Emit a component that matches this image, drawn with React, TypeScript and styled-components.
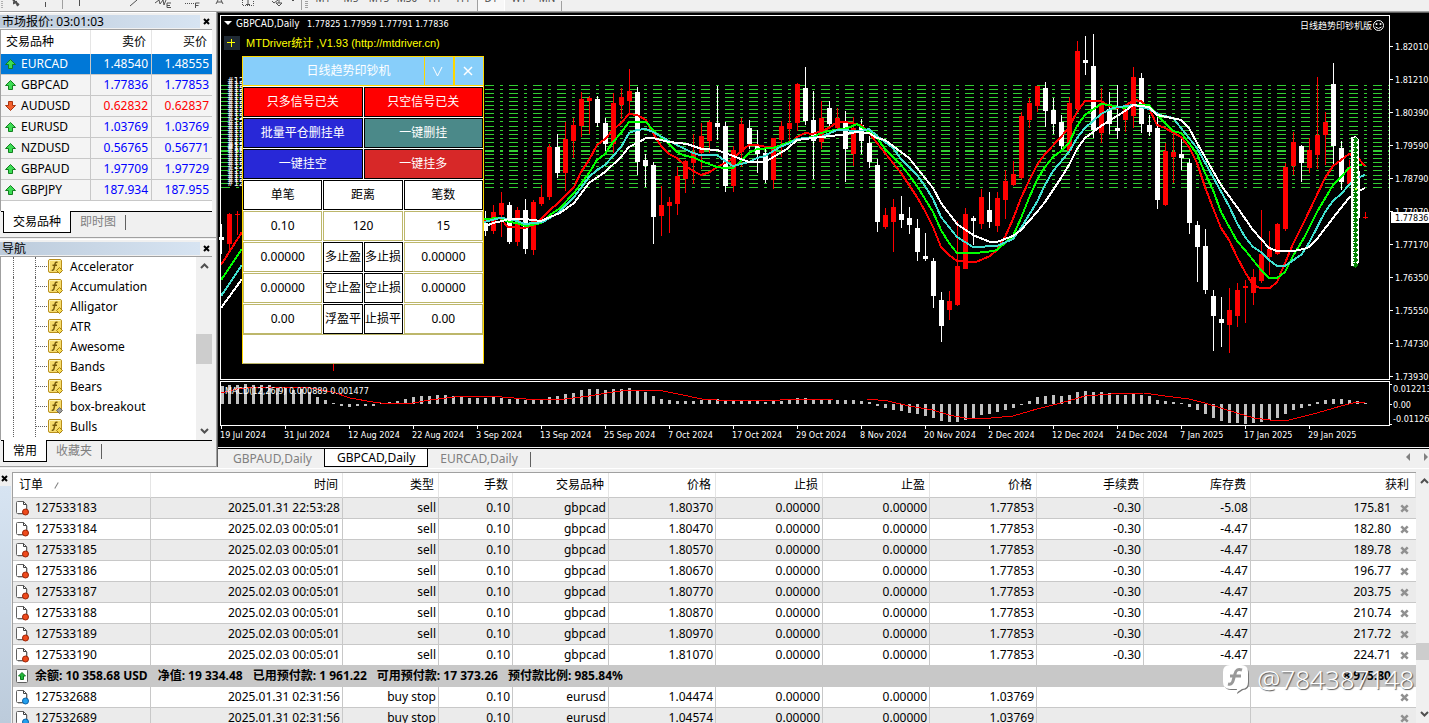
import React from 'react';
import styled, { createGlobalStyle } from 'styled-components';

const UI = `"Noto Sans", "Noto Sans CJK SC", sans-serif`;
const CHART = `"DejaVu Sans Condensed", "Noto Sans CJK SC", sans-serif`;

const Global = createGlobalStyle`
  * { box-sizing: border-box; }
  html, body, #root { height: 100%; }
  body { margin: 0; overflow: hidden; background: #f0f0f0; color: #000; font: 12px/20px ${UI}; }
  button, input { font: inherit; color: inherit; margin: 0; padding: 0; border: 0; border-radius: 0; background: none; }
`;

/* ---------- shell ---------- */
const Shell = styled.div`
  display: flex;
  flex-direction: column;
  height: 100%;
`;
const Toolbar = styled.header`
  display: flex;
  align-items: flex-end;
  flex: none;
  height: 11px;
  overflow: hidden;
`;
const ToolIcons = styled.svg`
  display: block;
  flex: none;
`;
const Frame = styled.button<{ $on?: boolean }>`
  width: 28px;
  height: 20px;
  padding-bottom: 6px;
  color: #505050;
  font-size: 10px;
  line-height: 12px;
  text-align: center;
  flex: none;
  ${(p) => p.$on && 'background:#f8f8f8;border-left:1px solid #a0a0a0;border-right:1px solid #fff;'}
`;
const BarEnd = styled.div`
  width: 1px;
  height: 10px;
  background: #a0a0a0;
`;
const Workspace = styled.div`
  display: flex;
  flex: none;
  border-top: 1px solid #a0a0a0;
`;
const Sidebar = styled.aside`
  display: flex;
  flex-direction: column;
  gap: 1px;
  width: 217px;
  flex: none;
  border-right: 1px solid #a0a0a0;
`;
const Dock = styled.section`
  padding: 1px 4px 4px 0;
  border-top: 1px solid #fff;
  border-bottom: 1px solid #a0a0a0;
`;
const DockTitle = styled.h2`
  display: flex;
  align-items: center;
  justify-content: space-between;
  height: 14px;
  margin: 0 0 1px;
  font-size: 12px;
  font-weight: 400;
  line-height: 14px;
  span {
    flex: 1;
    height: 13px;
    line-height: 13px;
    padding-left: 2px;
    background: linear-gradient(90deg, #bccbdb, #d7e4f2);
  }
`;
const DockClose = styled.button`
  display: flex;
  align-items: center;
  justify-content: center;
  width: 12px;
  height: 12px;
`;
const DockTabs = styled.div`
  display: flex;
  height: 22px;
  padding-left: 2px;
  border-top: 1px solid #000;
  margin-left: 1px;
`;
const DockTab = styled.button<{ $on?: boolean }>`
  height: 22px;
  margin-top: -1px;
  padding: 0 9px;
  line-height: 20px;
  color: ${(p) => (p.$on ? '#000' : '#808080')};
  ${(p) => p.$on && 'background:#fff;border:1px solid #000;border-top:0;'}
`;
const TabRule = styled.i`
  width: 1px;
  height: 15px;
  margin-top: 3px;
  background: #606060;
`;

/* ---------- quotes ---------- */
const QuoteBox = styled.div`
  height: 182px;
  border-top: 1px solid #a0a0a0;
  border-left: 1px solid #a0a0a0;
  background: #fff;
`;
const Quotes = styled.table`
  width: 100%;
  table-layout: fixed;
  border-collapse: separate;
  border-spacing: 0;
  th, td {
    height: 21px;
    padding: 0 3px 0 0;
    line-height: 20px;
    text-align: right;
    font-weight: 400;
    border-right: 1px solid #c8c8c8;
    border-bottom: 1px solid #c8c8c8;
  }
  th { height: 24px; padding-right: 5px; border-right-color: #e5e5e5; border-bottom: 0; }
  th:first-child { text-align: left; padding-left: 5px; }
  th:last-child, td:last-child { border-right: 0; }
`;
const QuoteRow = styled.tr<{ $tone: 'up' | 'down' | 'sel' }>`
  background: ${(p) => (p.$tone === 'sel' ? '#0078d7' : '#f4f4f4')};
  color: ${(p) => ({ up: '#0000ff', down: '#ff0000', sel: '#fff' })[p.$tone]};
  td:first-child {
    text-align: left;
    color: ${(p) => (p.$tone === 'sel' ? '#fff' : '#000')};
  }
`;
const IconLabel = styled.div<{ $pad: number }>`
  display: flex;
  align-items: center;
  gap: 5px;
  padding-left: ${(p) => p.$pad}px;
`;

/* ---------- navigator ---------- */
const Tree = styled.div`
  display: flex;
  height: 184px;
  border-top: 1px solid #a0a0a0;
  border-left: 1px solid #a0a0a0;
  background: #fff;
  overflow: hidden;
`;
const TreeList = styled.ul`
  flex: 1;
  margin: 0;
  padding: 0 0 0 12px;
  list-style: none;
`;
const TreeItem = styled.li`
  display: flex;
  align-items: center;
  height: 20px;
  border-left: 1px dotted #606060;
  &::before {
    content: '';
    width: 11px;
    height: 1px;
    order: 1;
    border-top: 1px dotted #606060;
  }
  &::after {
    content: '';
    width: 21px;
    height: 20px;
    order: 0;
    border-right: 1px dotted #606060;
  }
  svg { order: 2; margin: 0 6px 0 1px; }
  span { order: 3; }
`;
const Scroll = styled.div<{ $w: number }>`
  display: flex;
  flex-direction: column;
  justify-content: space-between;
  width: ${(p) => p.$w}px;
  flex: none;
  background: #f0f0f0;
  button { height: 18px; display: flex; align-items: center; justify-content: center; width: 17px; }
`;
const Thumb = styled.div<{ $h: number; $gap: number }>`
  height: ${(p) => p.$h}px;
  margin-top: ${(p) => p.$gap}px;
  margin-bottom: auto;
  background: #cdcdcd;
`;

/* ---------- chart ---------- */
const ChartArea = styled.main`
  flex: 1;
  min-width: 0;
  border-left: 1px solid #606060;
`;
const Canvas = styled.div`
  position: relative;
  display: flex;
  justify-content: flex-end;
  overflow: hidden;
  background: #000;
  border-top: 1px solid #606060;
  border-bottom: 1px solid #000;
  svg { display: block; flex: none; }
`;
const ChartTabs = styled.nav`
  display: flex;
  align-items: flex-start;
  height: 19px;
  margin-top: 1px;
  padding-left: 3px;
  border-top: 1px solid #000;
`;
const ChartTab = styled.button<{ $on?: boolean }>`
  height: 18px;
  padding: 0 12px;
  line-height: 17px;
  color: ${(p) => (p.$on ? '#000' : '#808080')};
  ${(p) => p.$on && 'background:#fff;border:1px solid #000;border-top:0;'}
`;
const TabArrows = styled.div`
  display: flex;
  gap: 12px;
  margin-left: auto;
  padding-top: 4px;
`;

/* ---------- floating trade panel ---------- */
const Panel = styled.form`
  position: absolute;
  left: 24px;
  top: 43px;
  display: grid;
  grid-template-columns: repeat(6, 1fr);
  grid-template-rows: 29px repeat(8, 30px) 28px;
  gap: 1px;
  width: 242px;
  background: #fff;
  border: 1px solid #ffd700;
  border-bottom-color: #bdb76b;
`;
const PanelTitle = styled.div`
  grid-column: span 6;
  display: grid;
  grid-template-columns: 1fr 29px 30px;
  border-bottom: 1px solid #ffd700;
  background: #87cefa;
  color: #fff;
  line-height: 28px;
  text-align: center;
  span { padding-left: 30px; }
  button {
    display: flex;
    align-items: center;
    justify-content: center;
    padding-right: 3px;
    border-left: 1px solid #ffd700;
  }
  button + button { border-left-width: 2px; }
`;
const Action = styled.button<{ $bg: string }>`
  grid-column: span 3;
  background: ${(p) => p.$bg};
  border: 1px solid #000;
  color: #fff;
  text-align: center;
`;
const Heading = styled.label`
  grid-column: span 2;
  border: 1px solid #000;
  line-height: 28px;
  text-align: center;
`;
const Field = styled.input`
  grid-column: span 2;
  min-width: 0;
  width: 100%;
  border: 1px solid #bdb76b;
  text-align: center;
`;
const Mini = styled.button`
  border: 1px solid #000;
  white-space: nowrap;
  display: flex;
  justify-content: center;
  align-items: center;
  min-width: 0;
`;
const Footer = styled.output`
  grid-column: span 6;
  margin-top: -1px;
  border-top: 1px solid #bdb76b;
`;

/* ---------- terminal ---------- */
const Terminal = styled.section`
  position: relative;
  display: flex;
  flex: 1;
  min-height: 0;
  margin-top: 1px;
  border-top: 1px solid #fff;
  padding-top: 3px;
  overflow: hidden;
`;
const Strip = styled.div`
  display: flex;
  flex-direction: column;
  width: 12px;
  flex: none;
  button { display: flex; align-items: center; justify-content: flex-start; height: 12px; padding-left: 1px; }
  &::after { content: ''; flex: 1; width: 11px; margin-top: 2px; background: linear-gradient(#d7e4f2, #bccbdb); }
`;
const OrdersBox = styled.div`
  flex: 1;
  min-width: 0;
  background: #fff;
  border-top: 1px solid #a0a0a0;
  border-left: 1px solid #a0a0a0;
`;
const Orders = styled.table`
  width: 100%;
  table-layout: fixed;
  border-collapse: separate;
  border-spacing: 0;
  th, td {
    height: 21px;
    padding: 0 2px 0 0;
    line-height: 20px;
    text-align: right;
    font-weight: 400;
    white-space: nowrap;
    border-right: 1px solid #c8c8c8;
    border-bottom: 1px solid #c8c8c8;
  }
  th { height: 25px; padding-right: 4px; border-right-color: #e5e5e5; }
  th:first-child { text-align: left; padding-left: 6px; }
  th:last-child { padding-right: 6px; }
  td:first-child { text-align: left; }
  td:last-child { border-right: 0; }
`;
const OrderRow = styled.tr<{ $alt: boolean }>`
  background: ${(p) => (p.$alt ? '#ebebeb' : '#fff')};
`;
const Summary = styled.tr`
  background: #c8c8c8;
  && td { font-weight: 700; border-right: 0; }
`;
const SumList = styled.div`
  display: flex;
  gap: 10px;
`;
const Profit = styled.div`
  display: flex;
  justify-content: flex-end;
  align-items: center;
  gap: 9px;
  padding-right: 5px;
  button { display: flex; width: 9px; }
`;
const SumProfit = styled.div`
  padding-right: 23px;
`;
const SortMark = styled.i`
  display: inline-block;
  width: 1px;
  height: 7px;
  margin-left: 13px;
  background: #808080;
  transform: rotate(30deg);
`;
const Watermark = styled.div`
  position: absolute;
  right: 15px;
  top: 194px;
  display: flex;
  align-items: center;
  gap: 8px;
  color: #fff;
  font-size: 26px;
  font-weight: 300;
  line-height: 32px;
  text-shadow: 1px 1px 1px #555;
`;

/* ---------- small drawings ---------- */
const Cross = ({ s = 7, c = '#000', w = 2 }: { s?: number; c?: string; w?: number }) => (
  <svg width={s} height={s} viewBox="0 0 7 7" aria-hidden="true">
    <path d="M1 1L6 6M6 1L1 6" stroke={c} strokeWidth={w} />
  </svg>
);
const Chevron = ({ up }: { up?: boolean }) => (
  <svg width="9" height="6" viewBox="0 0 9 6" aria-hidden="true">
    <path d={up ? 'M1 5L4.500 1.500L8 5' : 'M1 1L4.500 4.500L8 1'} fill="none" stroke="#505050" strokeWidth="2" />
  </svg>
);
const Arrow = ({ down }: { down?: boolean }) => (
  <svg width="11" height="12" viewBox="0 0 11 12" aria-hidden="true">
    {down ? (
      <path d="M3.500 1.500h4v4h3L5.500 10.500L.5 5.500h3z" fill="#f4602c" stroke="#a83410" />
    ) : (
      <path d="M5.500 1.500L10.500 6.500h-3v4h-4v-4h-3z" fill="#3ddc55" stroke="#12801f" />
    )}
  </svg>
);
const FnIcon = ({ grey }: { grey?: boolean }) => (
  <svg width="16" height="16" viewBox="0 0 16 16" aria-hidden="true">
    <rect x="0.500" y="0.500" width="13" height="13" rx="1.500" fill="#f6dc6c" stroke="#b98f1c" />
    <path d="M1.500 12V1.500H12.500" fill="none" stroke="#fdf3b8" />
    <path d="M9.500 3.500C8 2.800 7.300 3.500 7 5L6 9.500C5.700 11 5 11.500 3.800 11M4.500 6.200H9" fill="none" stroke="#75590a" strokeWidth="1.400" />
    <path d="M11.500 8.500L14.500 11.500L11.500 14.500L8.500 11.500z" fill={grey ? '#9a9a9a' : '#f7d94c'} stroke={grey ? '#666' : '#a07b12'} />
  </svg>
);
const DocIcon = ({ blue }: { blue?: boolean }) => (
  <svg width="15" height="16" viewBox="0 0 15 16" aria-hidden="true">
    <path d="M3 14.500h8M12.500 5v6" fill="none" stroke="#c8c8c8" />
    <path d="M1.500 2.500q0-1 1-1h6l3 3v8q0 1-1 1h-8q-1 0-1-1z" fill="#fff" stroke="#606060" />
    <path d="M8.500 1.500v3h3" fill="none" stroke="#404040" />
    <circle cx="10.500" cy="12" r="3" fill={blue ? '#22a0ee' : '#ee4a1c'} stroke={blue ? '#0b62a8' : '#9c2406'} />
  </svg>
);
const BalanceIcon = () => (
  <svg width="15" height="16" viewBox="0 0 15 16" aria-hidden="true">
    <rect x="1.500" y="1.500" width="11" height="13" rx="1" fill="#fff" stroke="#606060" />
    <path d="M7 4.500L10.500 8H8.500v3.500h-3V8h-2z" fill="#22b83a" stroke="#0c7a1c" />
  </svg>
);

/* ---------- data ---------- */
const quotes: [string, string, string, 'up' | 'down' | 'sel'][] = [
  ['EURCAD', '1.48540', '1.48555', 'sel'],
  ['GBPCAD', '1.77836', '1.77853', 'up'],
  ['AUDUSD', '0.62832', '0.62837', 'down'],
  ['EURUSD', '1.03769', '1.03769', 'up'],
  ['NZDUSD', '0.56765', '0.56771', 'up'],
  ['GBPAUD', '1.97709', '1.97729', 'up'],
  ['GBPJPY', '187.934', '187.955', 'up'],
];
const indicators = ['Accelerator', 'Accumulation', 'Alligator', 'ATR', 'Awesome', 'Bands', 'Bears', 'box-breakout', 'Bulls'];
const orders = [
  ['127533183', '2025.01.31 22:53:28', '1.80370', '-5.08', '175.81'],
  ['127533184', '2025.02.03 00:05:01', '1.80470', '-4.47', '182.80'],
  ['127533185', '2025.02.03 00:05:01', '1.80570', '-4.47', '189.78'],
  ['127533186', '2025.02.03 00:05:01', '1.80670', '-4.47', '196.77'],
  ['127533187', '2025.02.03 00:05:01', '1.80770', '-4.47', '203.75'],
  ['127533188', '2025.02.03 00:05:01', '1.80870', '-4.47', '210.74'],
  ['127533189', '2025.02.03 00:05:01', '1.80970', '-4.47', '217.72'],
  ['127533190', '2025.02.03 00:05:01', '1.81070', '-4.47', '224.71'],
];
const pending = [
  ['127532688', '2025.01.31 02:31:56', '1.04474'],
  ['127532689', '2025.01.31 02:31:56', '1.04574'],
];
const heads = ['时间', '类型', '手数', '交易品种', '价格', '止损', '止盈', '价格', '手续费', '库存费', '获利'];
const colWidths = [138, 192, 96, 74, 96, 107, 107, 107, 107, 107, 107];

// One candle per 8px step: colour, high, body top, body bottom, low.
const firstCandles = 'W 224 237 240 254|R 213 214 244 250|R 211 214 215 235';
const mainCandles =
  'W 211 223 231 236|R 205 212 231 234|R 192 203 215 237|W 202 205 242 244|R 207 210 242 246|W 199 210 249 254|R 200 202 250 255|R 185 197 204 206|R 144 147 197 200|W 134 147 173 178|R 122 139 173 191|R 118 125 141 158|R 92 99 126 137|R 96 98 101 134|W 96 99 123 127|W 118 123 144 152|R 93 103 144 153|R 88 97 105 119|R 69 91 101 115|W 87 92 162 175|W 154 160 166 187|W 162 165 217 244|R 186 205 216 236|R 197 202 206 233|R 167 176 204 215|R 160 161 179 193|R 134 152 163 184|R 123 136 153 169|R 120 122 141 153|W 86 123 127 140|W 122 126 186 192|R 146 150 186 192|R 118 124 152 167|W 120 128 144 149|W 130 146 154 173|W 148 153 180 183|R 138 138 180 189|R 121 126 140 157|R 101 123 129 143|R 83 84 123 131|W 67 88 121 125|W 91 120 141 179|R 101 118 142 149|W 101 108 124 129|R 108 118 128 131|W 111 123 149 182|R 117 128 154 166|W 119 125 141 154|W 136 143 162 168|W 159 165 222 232|R 208 215 227 229|R 199 207 222 252|W 196 214 220 228|W 207 218 225 234|W 219 228 252 261|W 233 256 259 261|W 258 261 296 308|W 292 300 326 342|R 291 301 310 320|R 221 266 305 306|R 208 214 269 269|W 216 218 221 245|R 189 197 224 229|W 192 210 222 228|R 192 198 226 232|R 170 181 200 219|R 161 174 185 186|R 112 116 178 179|R 98 103 120 128|R 86 86 106 112|W 82 88 111 127|W 98 110 124 134|W 115 122 146 149|R 97 103 151 152|R 41 51 109 110|W 36 60 63 75|W 34 66 130 138|R 88 103 133 143|W 92 109 124 134|W 85 128 131 139|R 106 109 120 132|R 67 77 116 128|W 73 78 124 133|W 115 125 132 136|W 112 128 200 209|R 143 151 205 206|R 134 152 157 183|W 139 154 158 170|W 159 163 223 234|W 221 225 247 282|W 229 246 290 294|W 290 296 316 351|W 297 319 323 347|R 288 310 325 353|R 283 290 316 327|R 280 286 288 323|R 269 277 293 305|R 210 254 281 283|R 231 249 257 275|R 223 224 254 255|R 163 167 229 231|R 132 142 166 175|W 145 146 163 182|R 138 150 168 173|R 77 135 155 169|R 112 122 135 165|W 63 84 146 165|W 141 148 182 190|R 160 167 184 186|W 165 171 218 220|R 212 217 218 219';

type Candle = { x: number; up: boolean; v: number[] };
const parse = (s: string, x0: number): Candle[] =>
  s.split('|').map((t, i) => {
    const [c, ...v] = t.split(' ');
    return { x: x0 + i * 8, up: c === 'R', v: v.map(Number) };
  });
const allCandles: Candle[] = [...parse(firstCandles, 221), ...parse(mainCandles, 485)];

const averages: [string, string][] = [
  ['#ff0000', '221,265 242,232|484,221 500,218 508,227 525,228 535,224 542,218 550,210 558,203 574,187 581,172 589,160 597,145 605,139 613,130 621,123 629,114 637,115 646,120 653,133 661,146 669,154 677,158 686,166 693,171 701,175 710,172 717,167 725,163 733,159 740,152 749,145 757,145 766,147 780,147 790,143 797,137 805,133 813,134 821,131 829,128 837,122 845,122 861,125 869,133 885,153 901,173 917,197 925,211 933,227 941,247 949,255 957,261 976,262 990,256 997,250 1005,237 1013,219 1021,198 1029,181 1037,165 1045,154 1061,137 1069,127 1077,112 1085,101 1101,101 1109,106 1117,108 1125,106 1134,100 1141,101 1149,108 1157,125 1165,128 1181,137 1189,147 1197,163 1205,187 1213,208 1221,228 1229,240 1237,257 1245,272 1253,285 1260,288 1270,288 1277,282 1285,263 1293,244 1305,220 1325,178 1333,166 1349,154 1357,157 1365,166'],
  ['#00ff00', '221,280 242,249|484,219 500,218 509,222 517,223 526,226 541,223 550,215 560,208 574,193 589,173 597,160 605,154 613,142 621,133 629,122 646,122 653,130 661,137 669,144 677,152 685,156 693,157 701,161 717,167 725,168 733,168 741,161 749,153 757,149 773,148 784,144 797,139 813,137 821,133 829,131 848,128 857,124 869,132 877,138 885,149 901,165 909,175 917,186 933,212 941,230 949,243 957,253 976,253 993,251 997,250 1013,236 1021,218 1029,198 1037,180 1045,167 1053,157 1061,151 1069,143 1077,126 1085,115 1101,104 1109,105 1125,108 1133,105 1149,105 1157,115 1173,131 1181,133 1189,143 1197,154 1205,173 1213,190 1221,212 1237,241 1245,250 1261,270 1269,278 1277,278 1285,272 1293,256 1304,238 1317,212 1333,185 1341,177 1349,168 1357,165 1362,165'],
  ['#40e0d0', '221,296 242,265|484,222 500,218 509,219 517,221 525,224 543,222 558,213 574,197 589,177 597,170 605,165 621,147 629,133 637,130 646,129 653,132 669,141 693,153 700,155 717,155 725,161 733,166 749,162 757,158 765,156 780,147 790,143 797,139 805,138 821,137 837,130 861,131 869,129 877,136 893,148 901,159 917,175 925,186 933,199 941,217 957,237 973,247 997,246 1013,239 1021,228 1037,202 1045,185 1053,171 1069,152 1077,138 1085,128 1101,114 1113,108 1133,105 1149,109 1160,115 1173,118 1181,128 1197,148 1213,177 1229,206 1237,223 1245,237 1253,247 1261,252 1269,260 1277,266 1285,266 1302,254 1309,243 1325,212 1333,201 1341,194 1349,185 1357,178 1365,175'],
  ['#ffffff', '221,308 242,279|484,227 493,223 502,221 509,219 525,219 541,221 550,217 560,213 574,203 589,183 605,172 621,157 629,147 637,143 646,138 653,138 669,142 687,144 702,149 717,150 733,156 749,162 765,162 780,153 787,149 797,140 813,138 840,135 857,132 869,133 877,138 885,140 909,158 933,188 941,203 957,224 973,235 990,242 997,242 1013,236 1021,230 1037,212 1045,202 1053,190 1061,178 1069,165 1077,149 1085,138 1101,126 1125,111 1133,105 1149,107 1157,115 1181,120 1189,128 1197,143 1221,185 1237,207 1253,230 1269,248 1277,251 1293,251 1304,249 1309,247 1317,239 1333,218 1349,198 1357,192 1365,188'],
];

// Top (or, under the zero line at 404, bottom) of every histogram bar.
const histogram = [
  386, 385, 385, 384, 385, 385, 385, 387, 388, 390, 389, 392, 397, 400, 403, 406, 407, 406, 406, 406, 403, 402, 401, 399, 397, 396, 396, 395, 395, 396, 397, 398, 398, 398, 397, 398, 399, 399, 400, 399, 399, 397, 396, 394, 393, 390, 389, 389, 390, 389, 389, 388, 391, 392, 396, 399, 400, 401, 401, 401, 400, 400, 399, 400, 400, 400, 400, 401, 402, 401, 401, 400, 398, 398, 399,
  399, 399, 400, 400, 400, 401, 402, 406, 408, 410, 411, 413, 414, 416, 418, 421, 422, 422, 420, 418, 415, 414, 412, 410, 408, 405, 401, 397, 396, 395, 396, 395, 392, 391, 392, 392, 393, 395, 395, 394, 395, 396, 400, 401, 402, 403, 407, 410, 414, 418, 421, 423, 423, 424, 423, 422, 420, 418, 414, 410, 408, 406, 402, 400, 399, 399, 400, 401, 403,
];
const signal =
  '221,393 237,389 256,387 304,387 333,392 350,398 373,402 389,404 413,403 430,400 454,397 477,396 502,397 526,399 565,399 589,396 613,392 629,390 658,390 678,394 702,399 717,400 780,400 834,399 867,399 888,401 909,406 933,410 949,415 965,418 991,418 1013,416 1037,409 1061,403 1085,396 1111,394 1144,393 1165,396 1189,399 1205,403 1221,408 1237,413 1254,418 1270,420 1289,420 1317,413 1341,406 1357,402 1365,402';
const levels = [85, 89, 93, 97, 101, 105, 109, 113, 117, 121, 126, 130, 134, 138, 142, 146, 150, 151, 154, 158, 162, 166, 170, 175, 179, 183, 187];
const prices = ['1.82010', '1.81210', '1.80390', '1.79590', '1.78790', '1.77970', '1.77170', '1.76350', '1.75550', '1.74730', '1.73930'];
const dates = ['19 Jul 2024', '31 Jul 2024', '12 Aug 2024', '22 Aug 2024', '3 Sep 2024', '13 Sep 2024', '25 Sep 2024', '7 Oct 2024', '17 Oct 2024', '29 Oct 2024', '8 Nov 2024', '20 Nov 2024', '2 Dec 2024', '12 Dec 2024', '24 Dec 2024', '7 Jan 2025', '17 Jan 2025', '29 Jan 2025'];
const range = (n: number) => Array.from({ length: n }, (_, i) => i);

const PriceChart = () => (
  <svg width="1211" height="433" viewBox="218 13 1211 433" shapeRendering="crispEdges" fontFamily={CHART} fontSize="9" fill="#fff">
    {levels.map((y) => (
      <line key={y} x1="221" x2="1389" y1={y + 0.5} y2={y + 0.5} stroke="#32cd32" strokeDasharray="9 6 3 6" />
    ))}
    {levels.map((y) => (
      <text key={y} x="227" y={y - 1}>#12</text>
    ))}
    {allCandles.map(({ x, up, v }) => (
      <g key={x} fill={up ? '#ff0000' : '#ffffff'}>
        <rect x={x} y={v[0]} width="1" height={v[3] - v[0]} />
        <rect x={x - 2} y={v[1]} width="5" height={v[2] - v[1]} />
      </g>
    ))}
    <rect x="333" y="364" width="1" height="7" fill="#ff0000" />
    {averages.map(([c, pts]) =>
      pts.split('|').map((p) => <polyline key={c + p.slice(0, 7)} points={p} fill="none" stroke={c} strokeWidth="2" />),
    )}
    <path d="M1351 137h3v-1h1l4 4v122l-4 5h-2v-1h-2z" fill="#fff" />
    {range(26).map((i) => (
      <path key={i} d={`M1353 ${138 + i * 5}h2v-1l4 3l-4 3v-1h-2v-1h1v-2h-1z`} fill="#008000" />
    ))}
    <rect x="1355" y="188" width="2" height="2" fill="#adff2f" />

    {histogram.map((y, i) => (
      <rect key={i} x={Math.max(221, 220 + i * 8)} y={Math.min(y, 404)} width="3" height={Math.abs(404 - y)} fill="#c0c0c0" />
    ))}
    <polyline points={signal} fill="none" stroke="#ff0000" />

    <path d="M220.500 379.500V15.500H1389.500V379.500zM220.500 425.500V381.500H1389.500V425.500z" fill="none" stroke="#fff" />
    <path d="M224 21h8l-4 4z" shapeRendering="auto" />
    <text x="236" y="27" fontSize="10">GBPCAD,Daily</text>
    <text x="307" y="27">1.77825 1.77959 1.77791 1.77836</text>
    <rect x="224" y="36" width="16" height="14" fill="#1f2933" />
    <path d="M231 39h1v3h3v1h-3v4h-1v-4h-4v-1h4z" fill="#ffff00" />
    <text x="246" y="47" fontSize="11" fill="#ffff00" fontFamily={`"Liberation Sans", "Noto Sans CJK SC", sans-serif`}>
      MTDriver统计 ,V1.93 (http://mtdriver.cn)
    </text>
    <text x="225" y="394">MACD(12,26,9) 0.000889 0.001477</text>
    <text x="1372" y="29" textAnchor="end">日线趋势印钞机版</text>
    <g shapeRendering="auto">
      <circle cx="1378.500" cy="25.500" r="5" fill="none" stroke="#fff" />
      <circle cx="1376.500" cy="24" r="1" />
      <circle cx="1380.500" cy="24" r="1" />
      <path d="M1375.500 27q3 3 6 0" fill="none" stroke="#fff" />
    </g>
    {prices.map((p, i) => (
      <g key={p}>
        <rect x="1390" y={46 + i * 33} width="3" height="1" />
        <text x="1395" y={50 + i * 33}>{p}</text>
      </g>
    ))}
    <rect x="1391" y="212" width="38" height="11" />
    <text x="1395" y="221" fill="#000">1.77836</text>
    <text x="1393" y="392">0.012213</text>
    <text x="1393" y="408">0.00</text>
    <text x="1393" y="422">-0.01126</text>
    <path d="M1390 384.500h2M1390 404.500h2M1390 424.500h2" stroke="#fff" />
    {dates.map((d, i) => (
      <g key={d}>
        <rect x={221 + i * 64} y="426" width="1" height="3" />
        <text x={220 + i * 64} y="438">{d}</text>
      </g>
    ))}
  </svg>
);

const TradePanel = () => (
  <Panel onSubmit={(e) => e.preventDefault()}>
    <PanelTitle>
      <span>日线趋势印钞机</span>
      <button type="button" aria-label="收起">
        <svg width="11" height="11" viewBox="0 0 11 11"><path d="M1 1L5.500 10L10 1" fill="none" stroke="#fff" /></svg>
      </button>
      <button type="button" aria-label="关闭">
        <svg width="10" height="10" viewBox="0 0 10 10"><path d="M1 1L9 9M9 1L1 9" fill="none" stroke="#fff" strokeWidth="1.500" /></svg>
      </button>
    </PanelTitle>
    <Action type="button" $bg="#ff0000">只多信号已关</Action>
    <Action type="button" $bg="#ff0000">只空信号已关</Action>
    <Action type="button" $bg="#2828d7">批量平仓删挂单</Action>
    <Action type="button" $bg="#4b8989">一键删挂</Action>
    <Action type="button" $bg="#2828d7">一键挂空</Action>
    <Action type="button" $bg="#d72828">一键挂多</Action>
    <Heading htmlFor="lot">单笔</Heading>
    <Heading htmlFor="distance">距离</Heading>
    <Heading htmlFor="count">笔数</Heading>
    <Field id="lot" defaultValue="0.10" />
    <Field id="distance" defaultValue="120" />
    <Field id="count" defaultValue="15" />
    <Field aria-label="多止盈" defaultValue="0.00000" />
    <Mini type="button">多止盈</Mini>
    <Mini type="button">多止损</Mini>
    <Field aria-label="多止损" defaultValue="0.00000" />
    <Field aria-label="空止盈" defaultValue="0.00000" />
    <Mini type="button">空止盈</Mini>
    <Mini type="button">空止损</Mini>
    <Field aria-label="空止损" defaultValue="0.00000" />
    <Field aria-label="浮盈平" defaultValue="0.00" />
    <Mini type="button">浮盈平</Mini>
    <Mini type="button">止损平</Mini>
    <Field aria-label="止损平" defaultValue="0.00" />
    <Footer />
  </Panel>
);

const TopBar = () => (
  <Toolbar>
    <ToolIcons width="309" height="11" viewBox="0 0 309 11" fill="none" stroke="#505050">
      <path d="M1 1.500h2M1 3.500h2M1 5.500h2M1 7.500h2" stroke="#b0b0b0" />
      <path d="M13 0L19 5M14 0v3l2-1l2 4" strokeWidth="2" />
      <path d="M45.500 2v5M79.500 0v6" />
      <path d="M62.500 0v9M301.500 0v10" stroke="#a0a0a0" />
      <path d="M130 6L137 0" />
      <path d="M155 3l4-3l1 4l3-4l1 5l2-5M171 7.500h-4V3h4M167 5.500h3" />
      <path d="M185 3.500h9" strokeDasharray="1 1" />
      <path d="M195.500 8V3h4M195.500 5.500h3M216 4l2-4M223 4l-2-4M217 2h5" />
      <path d="M242.500 0v5.500h11V0" strokeDasharray="1 1" />
      <path d="M246 4.500h4M248 0v4" />
      <path d="M272 1l2 2l4-3M276 3h6l-3 3zM279 0v3" />
      <path d="M292 0l1 1l1-1" />
      <path d="M305 1.500h3M305 3.500h3M305 5.500h3M305 7.500h3" stroke="#a0a0a0" />
    </ToolIcons>
    {['M1', 'M5', 'M15', 'M30', 'H1', 'H4', 'D1', 'W1', 'MN'].map((t) => (
      <Frame key={t} type="button" $on={t === 'D1'}>{t}</Frame>
    ))}
    <BarEnd />
  </Toolbar>
);

const MarketWatch = () => (
  <Dock>
    <DockTitle>
      <span>市场报价: 03:01:03</span>
      <DockClose aria-label="关闭市场报价"><Cross /></DockClose>
    </DockTitle>
    <QuoteBox>
      <Quotes>
        <colgroup><col width="90" /><col width="61" /><col /></colgroup>
        <thead><tr><th>交易品种</th><th>卖价</th><th>买价</th></tr></thead>
        <tbody>
          {quotes.map(([s, bid, ask, tone]) => (
            <QuoteRow key={s} $tone={tone}>
              <td><IconLabel $pad={4}><Arrow down={tone === 'down'} />{s}</IconLabel></td>
              <td>{bid}</td>
              <td>{ask}</td>
            </QuoteRow>
          ))}
        </tbody>
      </Quotes>
    </QuoteBox>
    <DockTabs>
      <DockTab $on>交易品种</DockTab>
      <DockTab>即时图</DockTab>
      <TabRule />
    </DockTabs>
  </Dock>
);

const Navigator = () => (
  <Dock>
    <DockTitle>
      <span>导航</span>
      <DockClose aria-label="关闭导航"><Cross /></DockClose>
    </DockTitle>
    <Tree>
      <TreeList>
        {indicators.map((n) => (
          <TreeItem key={n}><FnIcon grey={n === 'box-breakout'} /><span>{n}</span></TreeItem>
        ))}
      </TreeList>
      <Scroll $w={16}>
        <button aria-label="向上"><Chevron up /></button>
        <Thumb $h={30} $gap={59} />
        <button aria-label="向下"><Chevron /></button>
      </Scroll>
    </Tree>
    <DockTabs>
      <DockTab $on>常用</DockTab>
      <DockTab>收藏夹</DockTab>
      <TabRule />
    </DockTabs>
  </Dock>
);

const OrderTerminal = () => (
  <Terminal>
    <Strip><button aria-label="关闭终端"><Cross /></button></Strip>
    <OrdersBox>
      <Orders>
        <colgroup>{colWidths.map((w, i) => <col key={i} width={w} />)}<col /></colgroup>
        <thead>
          <tr>
            <th>订单<SortMark /></th>
            {heads.map((h, i) => <th key={i}>{h}</th>)}
          </tr>
        </thead>
        <tbody>
          {orders.map(([id, time, open, swap, profit], i) => (
            <OrderRow key={id} $alt={i % 2 === 0}>
              <td><IconLabel $pad={2}><DocIcon />{id}</IconLabel></td>
              <td>{time}</td><td>sell</td><td>0.10</td><td>gbpcad</td><td>{open}</td>
              <td>0.00000</td><td>0.00000</td><td>1.77853</td><td>-0.30</td><td>{swap}</td>
              <td><Profit>{profit}<button aria-label={`平仓 ${id}`}><Cross s={9} c="#909090" /></button></Profit></td>
            </OrderRow>
          ))}
          <Summary>
            <td colSpan={11}>
              <IconLabel $pad={2}>
                <BalanceIcon />
                <SumList>
                  <span>余额: 10 358.68 USD</span>
                  <span>净值: 19 334.48</span>
                  <span>已用预付款: 1 961.22</span>
                  <span>可用预付款: 17 373.26</span>
                  <span>预付款比例: 985.84%</span>
                </SumList>
              </IconLabel>
            </td>
            <td><SumProfit>8 975.80</SumProfit></td>
          </Summary>
          {pending.map(([id, time, open], i) => (
            <OrderRow key={id} $alt={i % 2 === 1}>
              <td><IconLabel $pad={2}><DocIcon blue />{id}</IconLabel></td>
              <td>{time}</td><td>buy stop</td><td>0.10</td><td>eurusd</td><td>{open}</td>
              <td>0.00000</td><td>0.00000</td><td>1.03769</td><td colSpan={2} />
              <td><Profit><button aria-label={`删除 ${id}`}><Cross s={9} c="#909090" /></button></Profit></td>
            </OrderRow>
          ))}
        </tbody>
      </Orders>
    </OrdersBox>
    <Scroll $w={13}>
      <button aria-label="向上"><Chevron up /></button>
      <Thumb $h={17} $gap={153} />
      <button aria-label="向下"><Chevron /></button>
    </Scroll>
    <Watermark>
      <svg width="27" height="30" viewBox="0 0 27 30" aria-hidden="true">
        <path d="M8 2h11q7 0 7 7v9q0 7-6 7l-6 4l1-4H8q-7 0-7-7V9q0-7 7-7z" fill="#777" transform="translate(1 1)" />
        <path d="M8 1h11q7 0 7 7v10q0 7-6 7l-6 4l1-4H8q-7 0-7-7V8q0-7 7-7z" fill="#fff" />
        <path d="M20 6q-6-2-7 4l-2 7q-1 4-5 3M8 12h11" fill="none" stroke="#999" strokeWidth="3" />
      </svg>
      @784387148
    </Watermark>
  </Terminal>
);

export default function App() {
  return (
    <Shell>
      <Global />
      <TopBar />
      <Workspace>
        <Sidebar>
          <MarketWatch />
          <Navigator />
        </Sidebar>
        <ChartArea>
          <Canvas>
            <PriceChart />
            <TradePanel />
          </Canvas>
          <ChartTabs>
            <ChartTab>GBPAUD,Daily</ChartTab>
            <ChartTab $on>GBPCAD,Daily</ChartTab>
            <ChartTab>EURCAD,Daily</ChartTab>
            <TabRule />
            <TabArrows>
              <svg width="6" height="8" viewBox="0 0 6 8"><path d="M5 0L1 4L5 8z" fill="#808080" /></svg>
              <svg width="6" height="8" viewBox="0 0 6 8"><path d="M1 0L5 4L1 8z" fill="#808080" /></svg>
            </TabArrows>
          </ChartTabs>
        </ChartArea>
      </Workspace>
      <OrderTerminal />
    </Shell>
  );
}
